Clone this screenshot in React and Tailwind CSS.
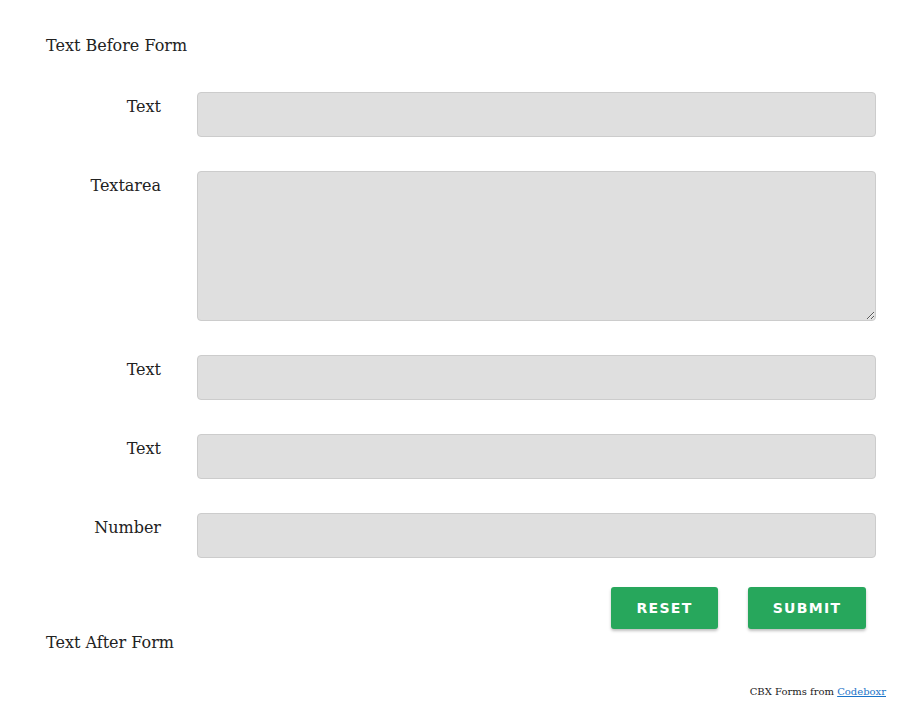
import { useState } from 'react'

const fields = [
  { label: 'Text', type: 'text' },
  { label: 'Textarea', type: 'textarea' },
  { label: 'Text', type: 'text' },
  { label: 'Text', type: 'text' },
  { label: 'Number', type: 'number' },
]

function FieldRow({ field }) {
  const base =
    'w-full rounded-[4px] border border-[#cccccc] bg-[#dfdfdf] px-3 text-[15px] text-[#333] outline-none'
  return (
    <div className="mb-[34px] flex items-start">
      <label className="w-[115px] shrink-0 pt-[3px] text-right leading-[24px]">
        {field.label}
      </label>
      <div className="ml-[36px] flex-1">
        {field.type === 'textarea' ? (
          <textarea className={`${base} block h-[150px] py-2`} />
        ) : (
          <input type={field.type} className={`${base} block h-[45px]`} />
        )}
      </div>
    </div>
  )
}

export default function App() {
  const [key, setKey] = useState(0)

  return (
    <div
      className="min-h-screen bg-white text-[16px] text-[#222]"
      style={{ fontFamily: '"DejaVu Serif", "Liberation Serif", serif' }}
    >
      <div className="px-[46px] pt-[34px]">
        <p className="mb-[34px] leading-[24px]">Text Before Form</p>

        <form key={key} onSubmit={(event) => event.preventDefault()}>
          {fields.map((field, index) => (
            <FieldRow key={index} field={field} />
          ))}

          <div className="-mt-[5px] flex justify-end gap-[30px] pr-[10px]">
            <button
              type="button"
              onClick={() => setKey((k) => k + 1)}
              className="h-[42px] w-[107px] rounded-[3px] bg-[#27a75c] text-[14px] font-bold uppercase tracking-[1.3px] text-white shadow-[0_2px_3px_rgba(0,0,0,0.25)]"
              style={{ fontFamily: '"DejaVu Sans", sans-serif' }}
            >
              Reset
            </button>
            <button
              type="submit"
              className="h-[42px] w-[118px] rounded-[3px] bg-[#27a75c] text-[14px] font-bold uppercase tracking-[1.3px] text-white shadow-[0_2px_3px_rgba(0,0,0,0.25)]"
              style={{ fontFamily: '"DejaVu Sans", sans-serif' }}
            >
              Submit
            </button>
          </div>
        </form>

        <p className="mt-[2px] leading-[24px]">Text After Form</p>
      </div>

      <div className="mt-[30px] pr-[36px] text-right text-[10px] leading-[14px]">
        CBX Forms from{' '}
        <a href="#" className="text-[#1a73c8] underline">
          Codeboxr
        </a>
      </div>
    </div>
  )
}
